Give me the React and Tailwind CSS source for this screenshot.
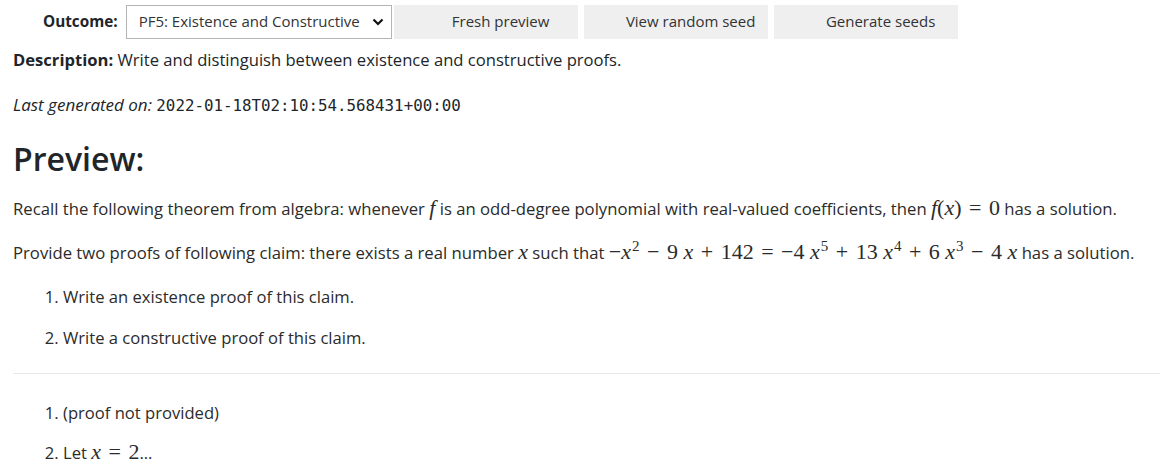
import React from "react";

const M = ({ children, i = true }) => (
  <span
    className={`${i ? "italic" : ""} text-[22px] leading-none`}
    style={{ fontFamily: '"Liberation Serif", "DejaVu Serif", serif' }}
  >
    {children}
  </span>
);

const Op = ({ children }) => <span className="mx-[7.5px]">{children}</span>;

const Sup = ({ children }) => (
  <span
    className="text-[15px] ml-[1px] relative -top-[8px]"
    style={{ fontFamily: '"Liberation Serif", "DejaVu Serif", serif' }}
  >
    {children}
  </span>
);

const App = () => {
  return (
    <div
      className="bg-white text-[#212529] w-[1160px] h-[476px] overflow-hidden"
      style={{ fontFamily: '"Open Sans", "Noto Sans", sans-serif' }}
    >
      <div className="flex items-center pt-[4px] h-[39px]">
        <label className="pl-[43px] pr-[8px] text-[15.3px] font-bold">Outcome:</label>
        <div className="flex items-center justify-between w-[266px] h-[34px] border border-[#b5b5b5] bg-white pl-[12px] pr-[7px] text-[15px] text-[#333]">
          <span>PF5: Existence and Constructive</span>
          <svg width="12" height="10" viewBox="0 0 12 10">
            <path d="M1.5 2.5 L6 7 L10.5 2.5" fill="none" stroke="#111" strokeWidth="2.2" />
          </svg>
        </div>
        <div className="flex gap-[6px] ml-[2px]">
          <button className="w-[184px] h-[34px] bg-[#efefef] pl-[30px] text-[15px] text-[#333]">Fresh preview</button>
          <button className="w-[184px] h-[34px] bg-[#efefef] pl-[30px] text-[15px] text-[#333]">View random seed</button>
          <button className="w-[184px] h-[34px] bg-[#efefef] pl-[30px] text-[15px] text-[#333]">Generate seeds</button>
        </div>
      </div>

      <div className="pl-[13px]">
        <p className="mt-[9px] text-[16.6px] leading-[24px]">
          <b>Description:</b> Write and distinguish between existence and constructive proofs.
        </p>
        <p className="mt-[21px] text-[17px] leading-[24px] italic">
          Last generated on:{" "}
          <code
            className="not-italic text-[15.8px]"
            style={{ fontFamily: '"DejaVu Sans Mono", "Liberation Mono", monospace' }}
          >
            2022-01-18T02:10:54.568431+00:00
          </code>
        </p>
        <h2 className="mt-[21px] text-[32px] leading-[40px] font-semibold">Preview:</h2>
        <div className="text-[#2b2b2b]">
          <p className="mt-[18px] text-[16.7px] leading-[24px]">
            Recall the following theorem from algebra: whenever <M>f</M> is an odd-degree polynomial with
            real-valued coefficients, then <M>f</M>
            <M i={false}>(</M>
            <M>x</M>
            <M i={false}>)</M>
            <M i={false}>
              <Op>=</Op>0
            </M>{" "}
            has a solution.
          </p>
          <p className="mt-[20px] text-[16.7px] leading-[24px]">
            Provide two proofs of following claim: there exists a real number <M>x</M> such that{" "}
            <M i={false}>−</M>
            <M>x</M>
            <Sup>2</Sup>
            <M i={false}>
              <Op>−</Op>9
            </M>
            <M> x</M>
            <M i={false}>
              <Op>+</Op>142<Op>=</Op>−4
            </M>
            <M> x</M>
            <Sup>5</Sup>
            <M i={false}>
              <Op>+</Op>13
            </M>
            <M> x</M>
            <Sup>4</Sup>
            <M i={false}>
              <Op>+</Op>6
            </M>
            <M> x</M>
            <Sup>3</Sup>
            <M i={false}>
              <Op>−</Op>4
            </M>
            <M> x</M> has a solution.
          </p>
          <ol className="list-decimal pl-[50px] mt-[19px] text-[16.6px] leading-[24px]">
            <li className="mb-[17px]">Write an existence proof of this claim.</li>
            <li>Write a constructive proof of this claim.</li>
          </ol>
          <hr className="mt-[23px] border-t border-[#e8e8e8]" />
          <ol className="list-decimal pl-[50px] mt-[27px] text-[16.6px] leading-[24px]">
            <li className="mb-[16px]">(proof not provided)</li>
            <li>
              Let <M>x</M>
              <M i={false}>
                <Op>=</Op>2
              </M>
              ...
            </li>
          </ol>
        </div>
      </div>
    </div>
  );
};

export default App;
